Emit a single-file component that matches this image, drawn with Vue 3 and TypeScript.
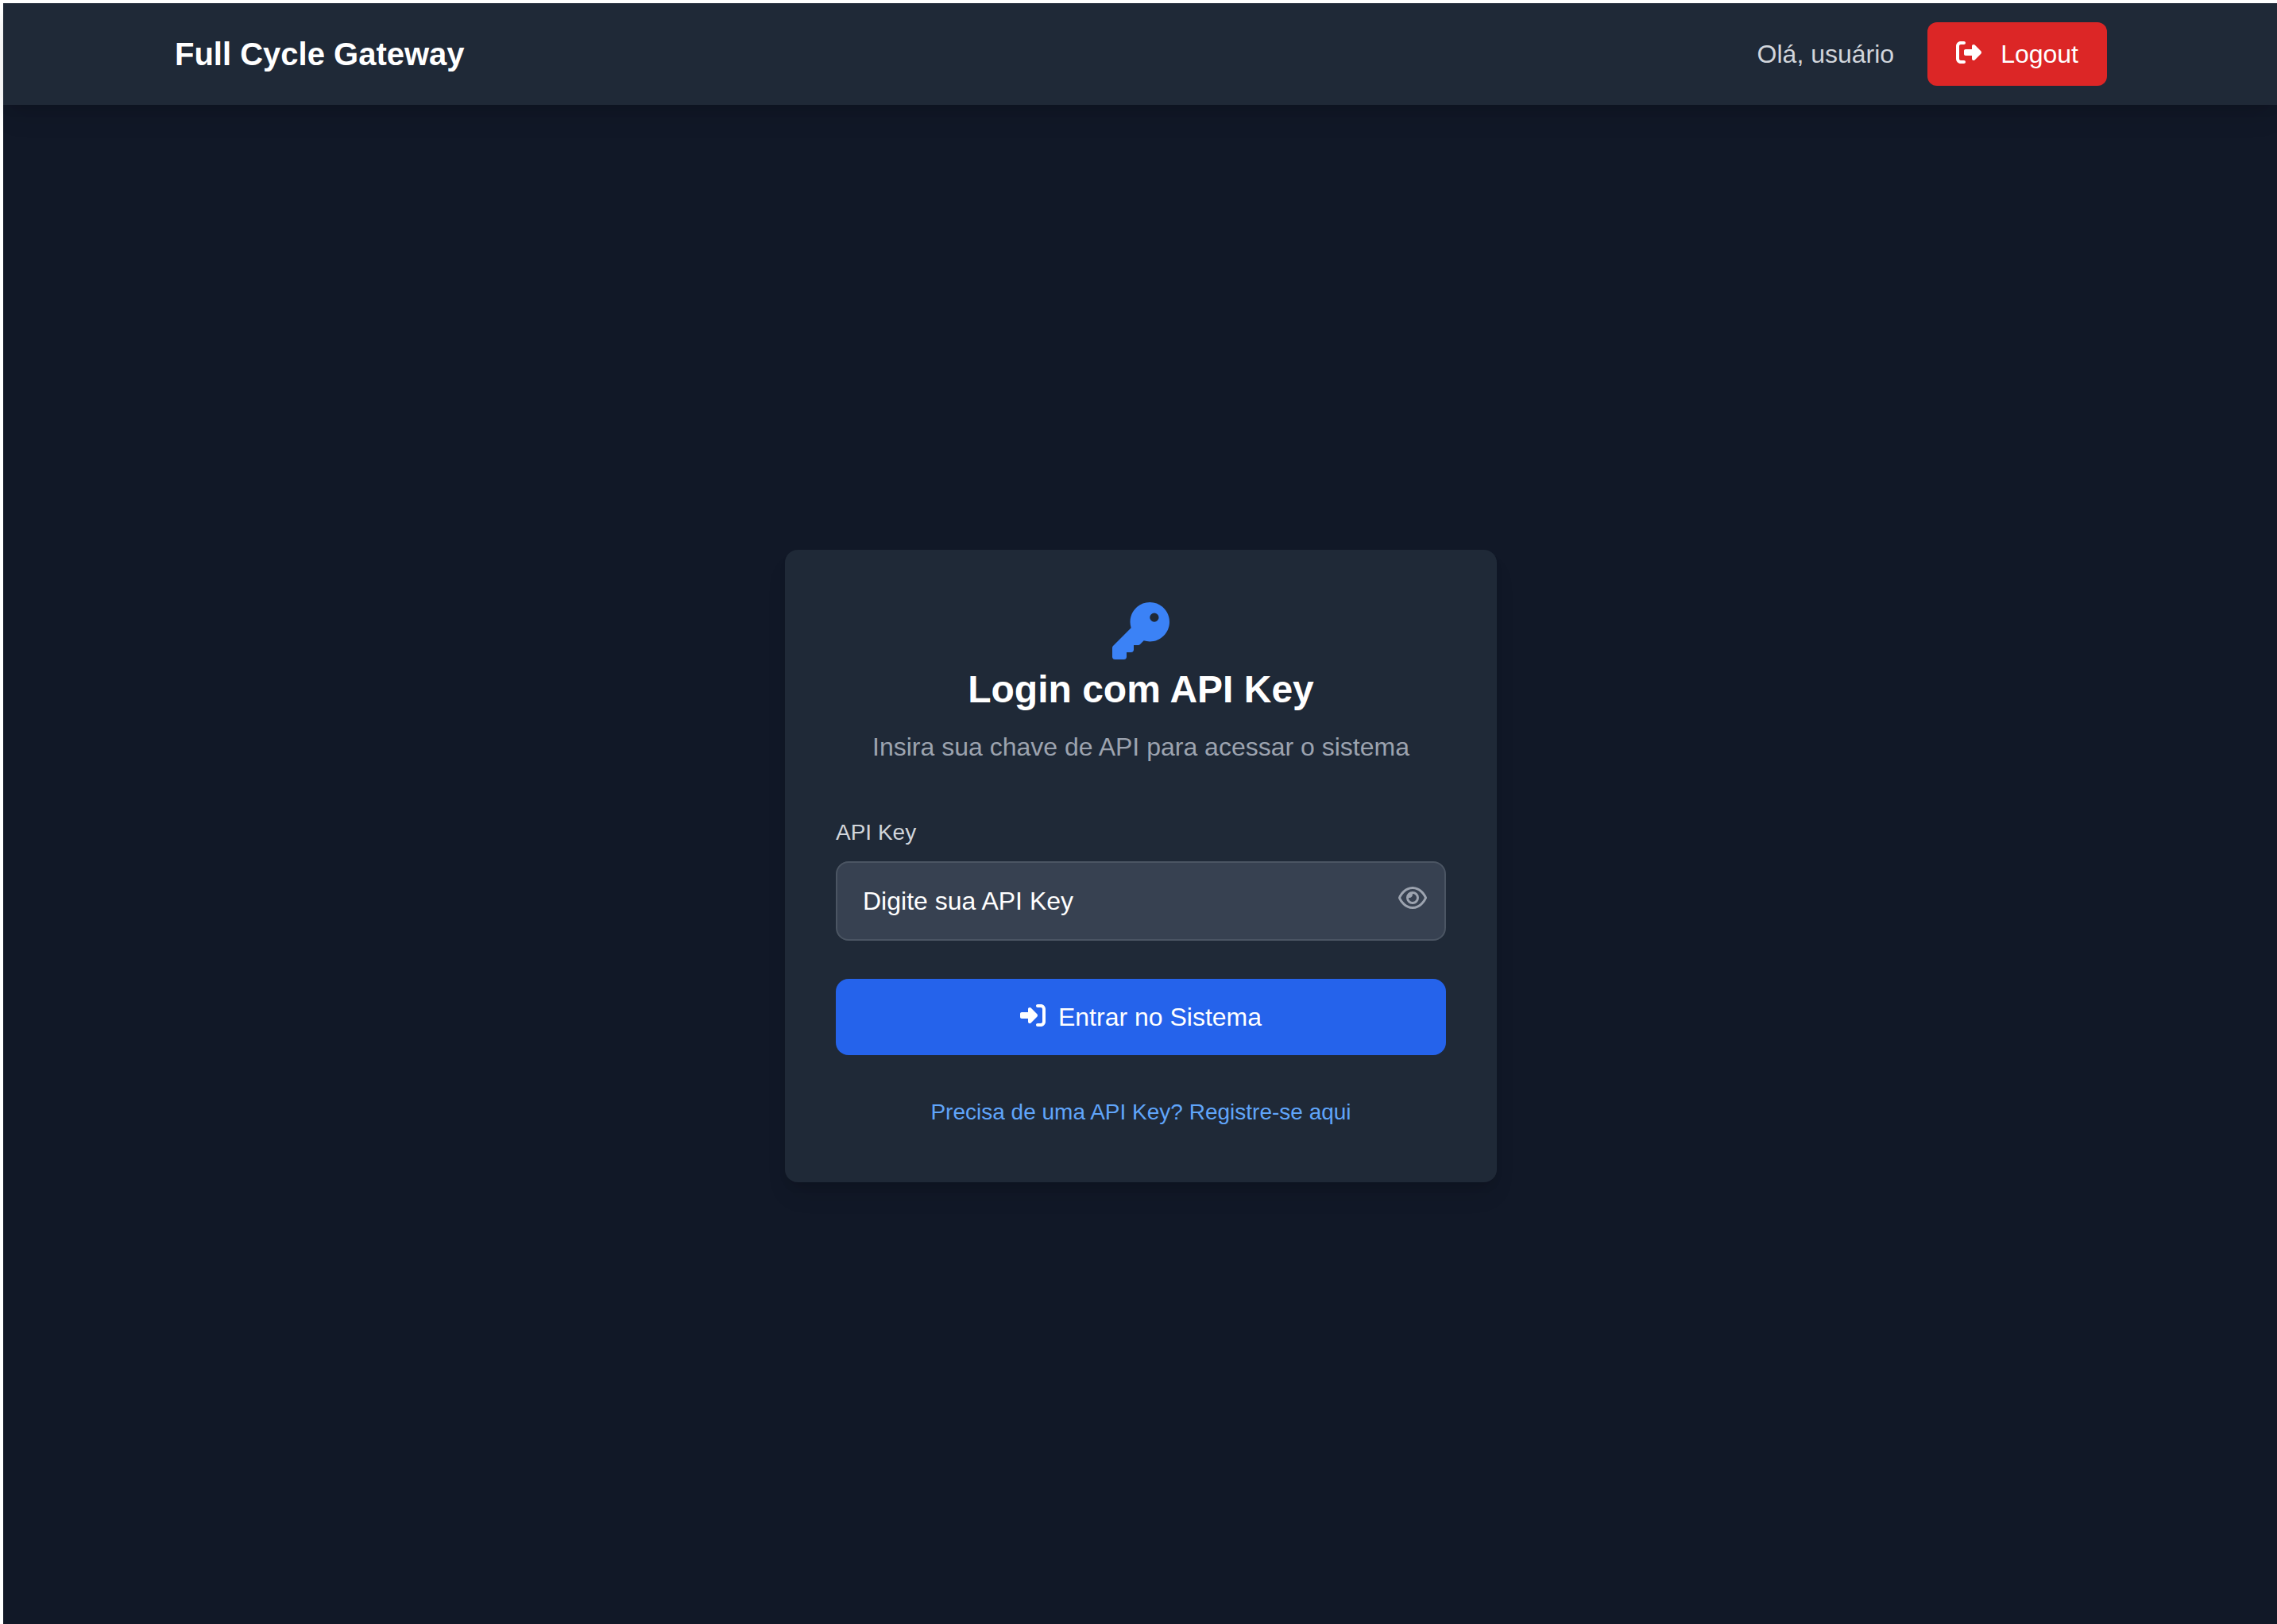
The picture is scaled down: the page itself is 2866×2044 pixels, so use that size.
<script setup lang="ts">
import { ref } from 'vue'

const apiKey = ref<string>('')
const revealed = ref<boolean>(true)

function toggleReveal(): void {
  revealed.value = !revealed.value
}
</script>

<template>
  <div class="page">
    <header class="topbar">
      <div class="container">
        <span class="brand">Full Cycle Gateway</span>
        <div class="session">
          <span class="greeting">Olá, usuário</span>
          <button type="button" class="logout">
            <svg class="btn-icon" viewBox="0 0 512 512" aria-hidden="true">
              <path fill="currentColor" d="M377.9 105.9L500.7 228.7c7.2 7.2 11.3 17.1 11.3 27.3s-4.1 20.1-11.3 27.3L377.9 406.1c-6.4 6.4-15 9.9-24 9.9c-18.7 0-33.9-15.2-33.9-33.9l0-62.1-128 0c-17.7 0-32-14.3-32-32l0-64c0-17.7 14.3-32 32-32l128 0 0-62.1c0-18.7 15.2-33.9 33.9-33.9c9 0 17.6 3.6 24 9.9zM160 96L96 96c-17.7 0-32 14.3-32 32l0 256c0 17.7 14.3 32 32 32l64 0c17.7 0 32 14.3 32 32s-14.3 32-32 32l-64 0c-53 0-96-43-96-96L0 128C0 75 43 32 96 32l64 0c17.7 0 32 14.3 32 32s-14.3 32-32 32z" />
            </svg>
            <span>Logout</span>
          </button>
        </div>
      </div>
    </header>

    <main class="content">
      <section class="card">
        <svg class="key-icon" viewBox="0 0 512 512" aria-hidden="true">
          <path fill="currentColor" d="M336 352c97.2 0 176-78.8 176-176S433.2 0 336 0S160 78.8 160 176c0 18.7 2.9 36.8 8.3 53.7L7 391c-4.5 4.5-7 10.6-7 17v80c0 13.3 10.7 24 24 24h80c13.3 0 24-10.7 24-24V448h40c13.3 0 24-10.7 24-24V384h40c6.4 0 12.5-2.5 17-7l33.3-33.3c16.9 5.4 35 8.3 53.7 8.3zM376 96a40 40 0 1 1 0 80 40 40 0 1 1 0-80z" />
        </svg>
        <h1 class="title">Login com API Key</h1>
        <p class="subtitle">Insira sua chave de API para acessar o sistema</p>

        <form class="form" @submit.prevent>
          <label class="label" for="api-key">API Key</label>
          <div class="field">
            <input
              id="api-key"
              v-model="apiKey"
              class="input"
              :type="revealed ? 'text' : 'password'"
              placeholder="Digite sua API Key"
            />
            <button type="button" class="reveal" aria-label="Mostrar API Key" @click="toggleReveal">
              <svg class="eye-icon" viewBox="0 0 576 512" aria-hidden="true">
                <path fill="currentColor" d="M288 80c-65.2 0-118.8 29.6-159.9 67.7C89.6 183.5 63 226 49.4 256c13.6 30 40.2 72.5 78.6 108.3C169.2 402.4 222.8 432 288 432s118.8-29.6 159.9-67.7C486.4 328.5 513 286 526.6 256c-13.6-30-40.2-72.5-78.6-108.3C406.8 109.6 353.2 80 288 80zM95.4 112.6C142.5 68.8 207.2 32 288 32s145.5 36.8 192.6 80.6c46.8 43.5 78.1 95.4 93 131.1c3.3 7.9 3.3 16.7 0 24.6c-14.9 35.7-46.2 87.7-93 131.1C433.5 443.2 368.8 480 288 480s-145.5-36.8-192.6-80.6C48.6 356 17.3 304 2.5 268.3c-3.3-7.9-3.3-16.7 0-24.6C17.3 208 48.6 156 95.4 112.6zM288 336c44.2 0 80-35.8 80-80s-35.8-80-80-80c-.7 0-1.3 0-2 0c1.3 5.1 2 10.5 2 16c0 35.3-28.7 64-64 64c-5.5 0-10.9-.7-16-2c0 .7 0 1.3 0 2c0 44.2 35.8 80 80 80zm0-208a128 128 0 1 1 0 256 128 128 0 1 1 0-256z" />
              </svg>
            </button>
          </div>
          <button type="submit" class="submit">
            <svg class="btn-icon" viewBox="0 0 512 512" aria-hidden="true">
              <path fill="currentColor" d="M217.9 105.9L340.7 228.7c7.2 7.2 11.3 17.1 11.3 27.3s-4.1 20.1-11.3 27.3L217.9 406.1c-6.4 6.4-15 9.9-24 9.9c-18.7 0-33.9-15.2-33.9-33.9l0-62.1L32 320c-17.7 0-32-14.3-32-32l0-64c0-17.7 14.3-32 32-32l128 0 0-62.1c0-18.7 15.2-33.9 33.9-33.9c9 0 17.6 3.6 24 9.9zM352 416l64 0c17.7 0 32-14.3 32-32l0-256c0-17.7-14.3-32-32-32l-64 0c-17.7 0-32-14.3-32-32s14.3-32 32-32l64 0c53 0 96 43 96 96l0 256c0 53-43 96-96 96l-64 0c-17.7 0-32-14.3-32-32s14.3-32 32-32z" />
            </svg>
            <span>Entrar no Sistema</span>
          </button>
        </form>

        <a class="register" href="#">Precisa de uma API Key? Registre-se aqui</a>
      </section>
    </main>
  </div>
</template>

<style>
body {
  margin: 0;
  background: #ffffff;
}
</style>

<style scoped>
.page {
  box-sizing: border-box;
  min-height: 100vh;
  display: flex;
  flex-direction: column;
  border-top: 4px solid #ffffff;
  border-left: 4px solid #ffffff;
  background: #111827;
  color: #ffffff;
  font-family: "Liberation Sans", Arial, sans-serif;
  font-size: 32px;
  line-height: 48px;
}

.topbar {
  padding: 24px 0 24px 2px;
  background: #1f2937;
  box-shadow: 0 20px 30px -6px rgba(0, 0, 0, 0.1), 0 8px 12px -4px rgba(0, 0, 0, 0.1);
}

.container {
  box-sizing: border-box;
  max-width: 2560px;
  margin: 0 auto;
  padding: 0 64px;
  display: flex;
  align-items: center;
  justify-content: space-between;
}

.brand {
  font-size: 40px;
  font-weight: 700;
  line-height: 56px;
}

.session {
  display: flex;
  align-items: center;
  gap: 42px;
}

.greeting {
  color: #d1d5db;
}

button {
  border: 0;
  font: inherit;
  color: inherit;
  cursor: pointer;
}

.logout {
  display: flex;
  align-items: center;
  gap: 24px;
  padding: 16px 36px;
  border-radius: 12px;
  background: #dc2626;
}

.btn-icon {
  width: 32px;
  height: 32px;
  margin-bottom: 4px;
}

.content {
  flex: 1;
  display: flex;
  align-items: center;
  justify-content: center;
  padding: 4px 0 0 2px;
}

.card {
  box-sizing: border-box;
  width: 100%;
  max-width: 896px;
  padding: 64px;
  display: flex;
  flex-direction: column;
  align-items: center;
  border-radius: 16px;
  background: #1f2937;
  box-shadow: 0 20px 30px -6px rgba(0, 0, 0, 0.1), 0 8px 12px -4px rgba(0, 0, 0, 0.1);
}

.key-icon {
  width: 72px;
  height: 72px;
  margin: 2px 0 6px;
  color: #3b82f6;
}

.title {
  margin: 0 0 16px;
  font-size: 48px;
  font-weight: 700;
  line-height: 64px;
}

.subtitle {
  margin: 0 0 64px;
  color: #9ca3af;
}

.form {
  width: 100%;
  display: flex;
  flex-direction: column;
}

.label {
  margin-bottom: 16px;
  color: #d1d5db;
  font-size: 28px;
  line-height: 40px;
}

.field {
  position: relative;
  display: flex;
  margin-bottom: 48px;
}

.input {
  box-sizing: border-box;
  width: 100%;
  padding: 24px 96px 24px 32px;
  border: 2px solid #4b5563;
  border-radius: 16px;
  background: #374151;
  color: #ffffff;
  font: inherit;
}

.input::placeholder {
  color: #ffffff;
  opacity: 1;
}

.reveal {
  position: absolute;
  top: 0;
  right: 24px;
  bottom: 8px;
  display: flex;
  align-items: center;
  padding: 0;
  background: transparent;
  color: #9ca3af;
}

.eye-icon {
  width: 36px;
  height: 32px;
}

.submit {
  display: flex;
  align-items: center;
  justify-content: center;
  gap: 16px;
  padding: 24px 32px;
  border-radius: 16px;
  background: #2563eb;
}

.register {
  margin-top: 48px;
  color: #60a5fa;
  font-size: 28px;
  text-decoration: none;
}
</style>
